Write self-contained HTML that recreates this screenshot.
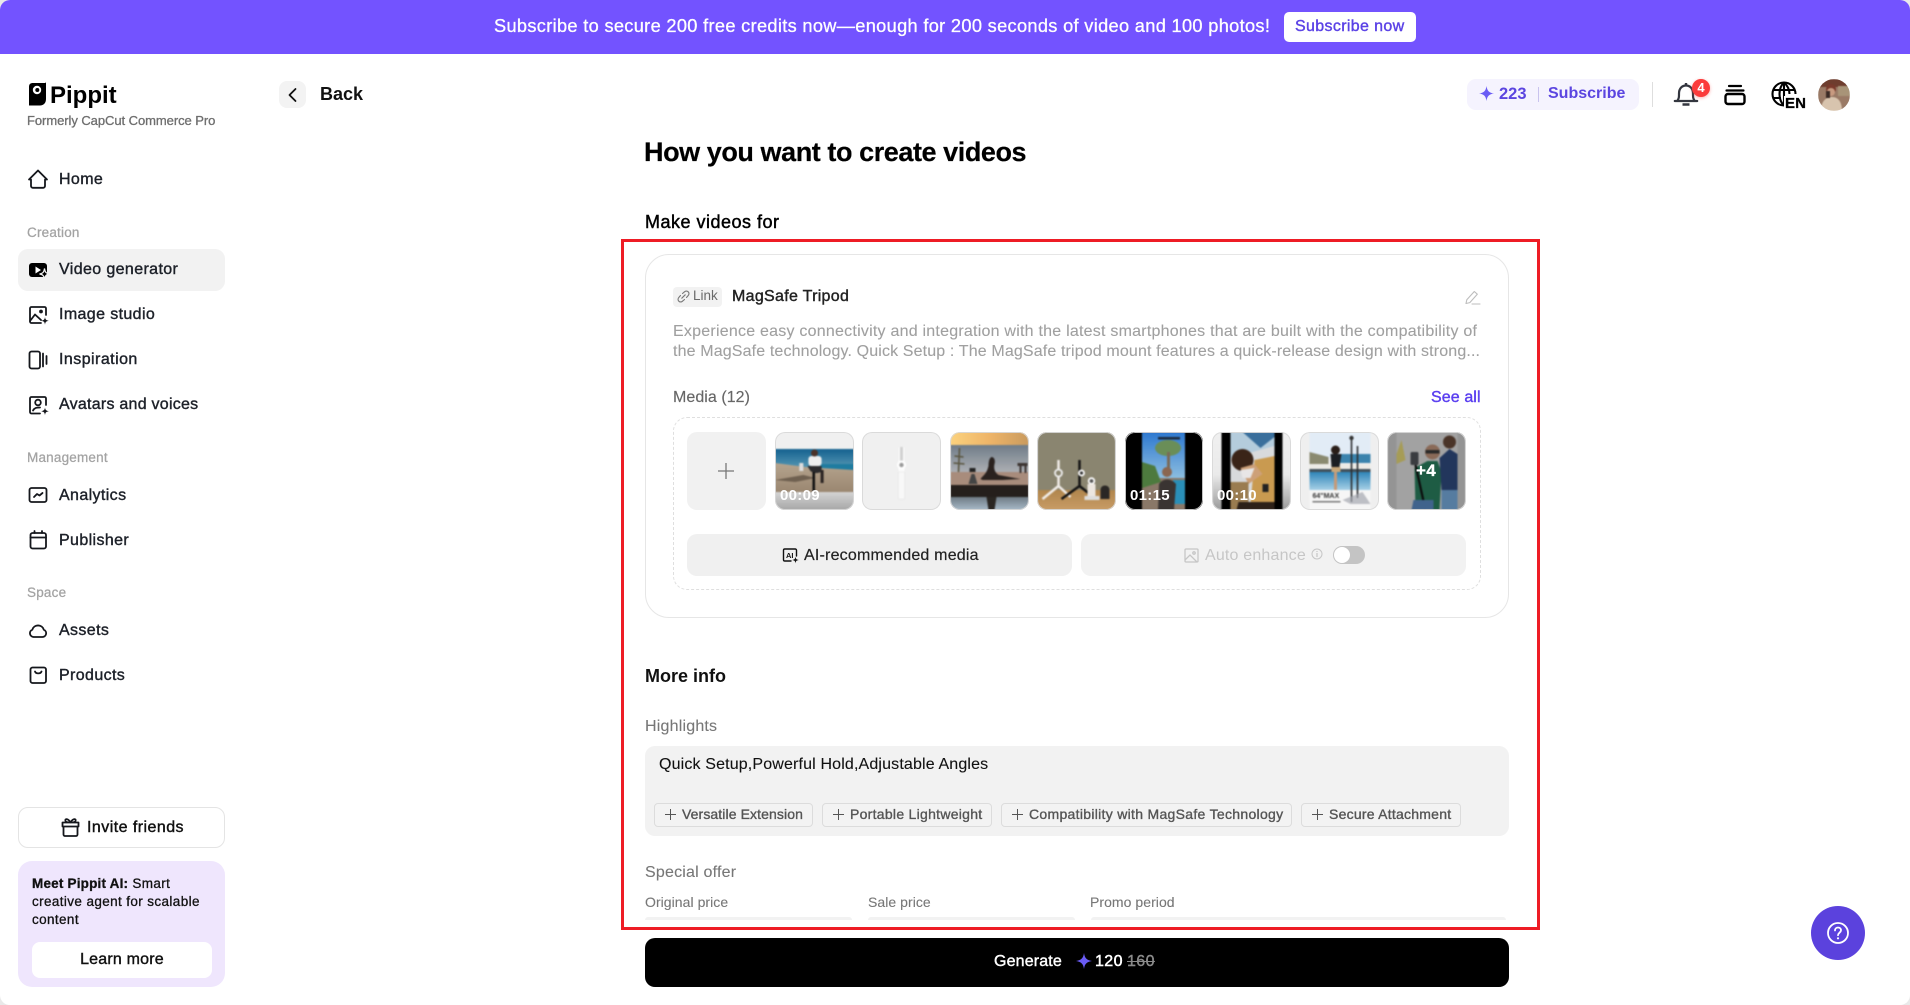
<!DOCTYPE html>
<html lang="en"><head><meta charset="utf-8"><title>Pippit</title>
<style>
*{box-sizing:border-box}
html,body{margin:0;padding:0;width:1910px;height:1005px;overflow:hidden;background:#e9e9e9}
body{font-family:"Liberation Sans",sans-serif;color:#111}
#app{position:absolute;left:0;top:0;width:1910px;height:1005px;background:#fff;border-radius:10px;overflow:hidden}
.a{position:absolute;white-space:nowrap;line-height:1}
.m{-webkit-text-stroke:.4px currentColor}
.nav{left:59px;font-size:16px;color:#1d2129;letter-spacing:.38px}
.cat{left:27px;font-size:13.5px;color:#a3a3a3;letter-spacing:.2px}
svg{position:absolute;overflow:visible}
.ic{fill:none;stroke:#15171c;stroke-width:1.8;stroke-linecap:round;stroke-linejoin:round}
.tile{position:absolute;top:432px;width:79px;height:78px;border-radius:10px;overflow:hidden;background:#f0f0f0}
.tile svg{left:0;top:0;width:100%;height:100%;filter:blur(.7px)}
.tile b{position:absolute;left:5px;top:56px;font-size:15px;line-height:1;color:#fff;letter-spacing:.3px}
.tile:after{content:"";position:absolute;inset:0;border-radius:10px;box-shadow:inset 0 0 0 1px rgba(215,215,215,.9)}
.chip{position:absolute;top:803px;height:24px;border:1px solid #dcdcdc;border-radius:4px;background:#f3f3f3;font-size:14px;line-height:21px;color:#555;-webkit-text-stroke:.35px #555;padding-left:27px;white-space:nowrap;letter-spacing:.1px}
.chip:before{content:"";position:absolute;left:10px;top:10px;width:11px;height:1px;background:#555}
.chip:after{content:"";position:absolute;left:15px;top:5px;width:1px;height:11px;background:#555}
</style></head><body>
<div id="app">

<!-- banner -->
<div class="a" style="left:0;top:0;width:1910px;height:54px;background:#7353ff"></div>
<div class="a" style="left:494px;top:17px;font-size:18.2px;color:#fff;letter-spacing:.33px;-webkit-text-stroke:.3px #fff">Subscribe to secure 200 free credits now—enough for 200 seconds of video and 100 photos!</div>
<div class="a" style="left:1284px;top:12px;width:132px;height:30px;background:#fff;border-radius:5px"></div>
<div class="a m" style="left:1295px;top:19px;font-size:16px;color:#5b42e6;letter-spacing:.35px">Subscribe now</div>

<!-- logo -->
<svg style="left:28px;top:81px" width="20" height="25" viewBox="0 0 20 25"><path d="M1 6C1 3 2.500 2 5 2H17.500L18 .8V18C18 22 15.500 24.500 12 24.500H1Z" fill="#000"/><circle cx="9" cy="9" r="4.200" fill="#fff"/><circle cx="9.300" cy="9" r="2" fill="#000"/></svg>
<div class="a" style="left:50px;top:84px;font-size:24px;font-weight:700;color:#000;letter-spacing:0">Pippit</div>
<div class="a m" style="left:27px;top:114px;font-size:13px;color:#6e6e6e;letter-spacing:-.06px;-webkit-text-stroke:.3px #6e6e6e">Formerly CapCut Commerce Pro</div>

<!-- back -->
<div class="a" style="left:279px;top:81px;width:27px;height:27px;background:#f3f3f3;border-radius:8px"></div>
<svg style="left:279px;top:81px" width="27" height="27"><path d="M16.500 8L10.500 14L16.500 20" fill="none" stroke="#111" stroke-width="1.800" stroke-linecap="round" stroke-linejoin="round"/></svg>
<div class="a" style="left:320px;top:85px;font-size:18px;font-weight:700;color:#111">Back</div>

<!-- sidebar -->
<svg class="ic" style="left:28px;top:169px" width="20" height="20" viewBox="0 0 20 20"><path d="M1 10.500L10 1.500L19 10.500H17V17A1.800 1.800 0 0 1 15.200 18.800H4.800A1.800 1.800 0 0 1 3 17V10.500Z"/></svg>
<div class="a m nav" style="top:172px">Home</div>
<div class="a m cat" style="top:226px;-webkit-text-stroke:.25px #a3a3a3">Creation</div>

<div class="a" style="left:18px;top:249px;width:207px;height:42px;background:#f2f2f2;border-radius:10px"></div>
<svg style="left:28px;top:261px" width="22" height="20" viewBox="0 0 22 20"><rect x="1" y="2" width="18" height="14" rx="3" fill="#000"/><path d="M7.500 5.500L13 9L7.500 12.500Z" fill="#fff"/><path d="M16.500 7.500C17 11 18 12.500 21.500 13C18 13.500 17 15 16.500 18.500C16 15 15 13.500 11.500 13C15 12.500 16 11 16.500 7.500Z" fill="#000" stroke="#f2f2f2" stroke-width="1.200"/></svg>
<div class="a m nav" style="top:262px">Video generator</div>

<svg class="ic" style="left:28px;top:306px" width="22" height="20" viewBox="0 0 22 20"><path d="M13 17H3.500A1.500 1.500 0 0 1 2 15.500V2.500A1.500 1.500 0 0 1 3.500 1H16.500A1.500 1.500 0 0 1 18 2.500V9"/><path d="M2 15L7 8.500L13 14"/><circle cx="13" cy="5.500" r="1" fill="#15171c"/><path d="M17 11C17.400 13.500 18 14.200 20.800 14.800C18 15.400 17.400 16 17 18.800C16.600 16 16 15.400 13.200 14.800C16 14.200 16.600 13.500 17 11Z" fill="#15171c" stroke="none"/></svg>
<div class="a m nav" style="top:307px">Image studio</div>

<svg class="ic" style="left:28px;top:350px" width="22" height="20" viewBox="0 0 22 20"><rect x="1.500" y="1.500" width="10.500" height="17" rx="2"/><path d="M15 3.500V16.500M18.500 6V14"/></svg>
<div class="a m nav" style="top:352px;letter-spacing:.45px">Inspiration</div>

<svg class="ic" style="left:28px;top:396px" width="22" height="20" viewBox="0 0 22 20"><path d="M12 17.500H3.500A1.500 1.500 0 0 1 2 16V2.500A1.500 1.500 0 0 1 3.500 1H16.500A1.500 1.500 0 0 1 18 2.500V9"/><circle cx="10" cy="6.500" r="2.800"/><path d="M5 14.500C6.500 12 8 11.500 12 11.500"/><path d="M17 11.500C17.400 14 18 14.600 20.800 15.200C18 15.800 17.400 16.400 17 19.200C16.600 16.400 16 15.800 13.200 15.200C16 14.600 16.600 14 17 11.500Z" fill="#15171c" stroke="none"/></svg>
<div class="a m nav" style="top:397px;letter-spacing:.25px">Avatars and voices</div>

<div class="a m cat" style="top:451px;-webkit-text-stroke:.25px #a3a3a3">Management</div>
<svg class="ic" style="left:28px;top:486px" width="20" height="18" viewBox="0 0 20 18"><rect x="1.500" y="2" width="17" height="14" rx="2"/><path d="M6 11L9 8L11.500 9.500L14.500 7"/></svg>
<div class="a m nav" style="top:488px">Analytics</div>
<svg class="ic" style="left:28px;top:530px" width="20" height="20" viewBox="0 0 20 20"><rect x="2.500" y="3" width="15.500" height="15.500" rx="2"/><path d="M2.500 7.500H18M6.500 1V3M14 1V3"/></svg>
<div class="a m nav" style="top:533px">Publisher</div>
<div class="a m cat" style="top:586px;-webkit-text-stroke:.25px #a3a3a3">Space</div>
<svg class="ic" style="left:28px;top:620px" width="20" height="19" viewBox="0 0 20 19"><path d="M5.500 17H14.500A3.800 3.800 0 0 0 15.800 9.700A6 6 0 0 0 4.300 9.700A3.800 3.800 0 0 0 5.500 17Z"/></svg>
<div class="a m nav" style="top:623px">Assets</div>
<svg class="ic" style="left:28px;top:666px" width="20" height="19" viewBox="0 0 20 19"><rect x="2.500" y="1.500" width="15.500" height="15.500" rx="2"/><path d="M7 5.500C8 8 12.500 8 13.500 5.500"/></svg>
<div class="a m nav" style="top:668px">Products</div>

<div class="a" style="left:18px;top:807px;width:207px;height:41px;border:1px solid #e4e4e4;border-radius:10px;background:#fff"></div>
<svg class="ic" style="left:61px;top:817px" width="19" height="20" viewBox="0 0 19 20"><path d="M2.500 9.500V17.500A1.500 1.500 0 0 0 4 19H15A1.500 1.500 0 0 0 16.500 17.500V9.500M1.500 5.500H17.500V9.500H1.500ZM9.500 5.500C7 1 3.500 1.500 4.500 4C5 5 7 5.500 9.500 5.500C12 5.500 14 5 14.500 4C15.500 1.500 12 1 9.500 5.500Z"/></svg>
<div class="a m" style="left:87px;top:820px;font-size:16px;color:#111;letter-spacing:.45px">Invite friends</div>

<div class="a" style="left:18px;top:861px;width:207px;height:126px;background:#efe6fd;border-radius:14px"></div>
<div class="a m" style="left:32px;top:875px;font-size:13.5px;line-height:18px;color:#111;white-space:normal;width:195px;letter-spacing:.38px;-webkit-text-stroke:.3px #111"><b style="letter-spacing:.2px">Meet Pippit AI:</b> Smart<br>creative agent for scalable<br>content</div>
<div class="a" style="left:32px;top:942px;width:180px;height:36px;background:#fff;border-radius:8px"></div>
<div class="a m" style="left:32px;top:952px;width:180px;text-align:center;font-size:16px;color:#111;letter-spacing:.2px">Learn more</div>

<!-- top right -->
<div class="a" style="left:1467px;top:79px;width:172px;height:31px;background:#f5f3fe;border-radius:9px"></div>
<svg style="left:1479px;top:86px" width="15" height="15" viewBox="0 0 14 14"><path d="M7 0C7.600 4.500 9.500 6.400 14 7C9.500 7.600 7.600 9.500 7 14C6.400 9.500 4.500 7.600 0 7C4.500 6.400 6.400 4.500 7 0Z" fill="#6a5cf5"/></svg>
<div class="a" style="left:1499px;top:86px;font-size:16.5px;font-weight:700;color:#5b45e0">223</div>
<div class="a" style="left:1538px;top:87px;width:1px;height:15px;background:#c9c3ee"></div>
<div class="a" style="left:1548px;top:86px;font-size:16px;font-weight:700;color:#5b45e0;letter-spacing:0">Subscribe</div>
<div class="a" style="left:1652px;top:82px;width:1px;height:25px;background:#dedede"></div>
<svg style="left:1674px;top:82px" width="24" height="25" viewBox="0 0 24 25"><path d="M3.500 18.500C5 16.500 5 15 5 11.500C5 6.500 8 3.500 12 3.500C16 3.500 19 6.500 19 11.500C19 15 19 16.500 20.500 18.500M.8 19H23.200" fill="none" stroke="#33363f" stroke-width="2.200" stroke-linecap="round"/><path d="M12 1V3M8.500 22.500H15.500" stroke="#33363f" stroke-width="2.400" fill="none"/></svg>
<div class="a" style="left:1692px;top:79px;width:18px;height:18px;border-radius:50%;background:#fb3b3b;color:#fff;font-size:13px;font-weight:700;text-align:center;line-height:18px;box-shadow:0 1px 3px rgba(250,60,60,.4)">4</div>
<svg style="left:1724px;top:84px" width="22" height="22" viewBox="0 0 22 22"><path d="M5 2H17M2.500 6.500H19.500" fill="none" stroke="#000" stroke-width="2.200" stroke-linecap="round"/><rect x="1.500" y="10" width="19" height="10" rx="2.500" fill="none" stroke="#000" stroke-width="2.400"/></svg>
<svg style="left:1771px;top:81px" width="26" height="26" viewBox="0 0 26 26"><g fill="none" stroke="#000" stroke-width="2.100"><path d="M13 24.500A11.500 11.500 0 1 1 24.500 13"/><path d="M13 1.500C7 7 7 19 13 24.500M13 1.500C17.500 5.500 18.500 10 18.500 13M13 1.500V24.500M2 9H24M2 17H10"/></g></svg>
<div class="a" style="left:1784px;top:96px;font-size:15px;font-weight:700;color:#000;background:#fff;padding:0 0 0 1px;letter-spacing:.1px;-webkit-text-stroke:.3px #000">EN</div>
<svg style="left:1818px;top:79px" width="32" height="32" viewBox="0 0 32 32"><defs><clipPath id="av"><circle cx="16" cy="16" r="16"/></clipPath></defs><g clip-path="url(#av)" style="filter:blur(.6px)"><rect width="32" height="32" fill="#9a7a66"/><rect y="0" width="32" height="8" fill="#6e3d2e"/><rect x="20" y="7" width="12" height="10" fill="#a89478"/><circle cx="13" cy="10" r="5" fill="#7a3a2c"/><circle cx="13" cy="13" r="4" fill="#c89a80"/><path d="M3 32C3 22 8 18 14 18C21 18 24 24 24 32Z" fill="#d8c4ae"/><rect x="8" y="12" width="4" height="7" fill="#3b2a25"/></g></svg>

<!-- heading -->
<div class="a" style="left:644px;top:139px;font-size:27px;font-weight:700;color:#000;letter-spacing:-.43px;-webkit-text-stroke:.2px #000">How you want to create videos</div>
<div class="a" style="left:645px;top:213px;font-size:18px;color:#000;letter-spacing:.5px;-webkit-text-stroke:.45px #000">Make videos for</div>

<!-- red box -->
<div class="a" style="left:621px;top:239px;width:919px;height:691px;border:3px solid #ee1c25"></div>

<!-- card -->
<div class="a" style="left:645px;top:254px;width:864px;height:364px;border:1px solid #e6e6e6;border-radius:24px"></div>
<div class="a" style="left:673px;top:287px;width:49px;height:20px;background:#f2f2f2;border-radius:4px"></div>
<svg style="left:677px;top:290px" width="13" height="13" viewBox="0 0 13 13"><g fill="none" stroke="#777" stroke-width="1.100" stroke-linecap="round"><path d="M5.500 3.500L7.500 1.800A2.400 2.400 0 0 1 11.200 5.500L9.500 7.500"/><path d="M7.500 9.500L5.500 11.200A2.400 2.400 0 0 1 1.800 7.500L3.500 5.500"/><path d="M4.800 8.200L8.200 4.800"/></g></svg>
<div class="a" style="left:693px;top:289px;font-size:13.5px;color:#6a6a6a">Link</div>
<div class="a m" style="left:732px;top:289px;font-size:16px;color:#222;letter-spacing:.3px">MagSafe Tripod</div>
<svg style="left:1465px;top:290px" width="16" height="15" viewBox="0 0 16 15"><g fill="none" stroke="#bdbdbd" stroke-width="1.100" stroke-linejoin="round" stroke-linecap="round"><path d="M1 13.500L1.800 9.800L9.300 1.500L12.300 4.200L4.800 12.600Z"/><path d="M7 14H15"/></g></svg>
<div class="a" style="left:673px;top:324px;font-size:16px;color:#a0a0a0;letter-spacing:.23px;-webkit-text-stroke:.1px #a0a0a0">Experience easy connectivity and integration with the latest smartphones that are built with the compatibility of</div>
<div class="a" style="left:673px;top:344px;font-size:16px;color:#a0a0a0;letter-spacing:.14px;-webkit-text-stroke:.1px #a0a0a0">the MagSafe technology. Quick Setup : The MagSafe tripod mount features a quick-release design with strong...</div>
<div class="a" style="left:673px;top:390px;font-size:16px;color:#666;letter-spacing:.05px;-webkit-text-stroke:.15px #666">Media (12)</div>
<div class="a m" style="left:1431px;top:390px;font-size:16px;color:#5a3ff0;letter-spacing:.1px">See all</div>

<!-- media -->
<div class="a" style="left:673px;top:417px;width:808px;height:173px;border:1px dashed #dfdfdf;border-radius:14px"></div>
<div class="a" style="left:687px;top:432px;width:79px;height:78px;background:#f1f1f1;border-radius:10px"></div>
<svg style="left:718px;top:463px" width="16" height="16"><path d="M8 0V16M0 8H16" stroke="#777" stroke-width="1.300"/></svg>

<div class="tile" style="left:775px"><svg viewBox="0 0 78 78" preserveAspectRatio="none"><defs><linearGradient id="g1" x1="0" y1="0" x2="0" y2="1"><stop offset="0" stop-color="#d4d4d4"/><stop offset="1" stop-color="#a6a6a6"/></linearGradient><linearGradient id="s1" x1="0" y1="0" x2="0" y2="1"><stop offset="0" stop-color="#14618f"/><stop offset="1" stop-color="#5a9ab5"/></linearGradient><linearGradient id="sd" x1="0" y1="0" x2="0" y2="1"><stop offset="0" stop-color="#b5a48e"/><stop offset="1" stop-color="#9a8670"/></linearGradient></defs><rect y="17" width="78" height="20" fill="url(#s1)"/><rect x="45" y="32" width="33" height="6" fill="#1f7ca0"/><path d="M0 31L30 35L78 38V60H0Z" fill="url(#sd)"/><path d="M0 48L28 43L40 46L20 50Z" fill="#6f6050"/><rect y="60" width="78" height="18" fill="url(#g1)"/><rect x="33" y="24" width="13" height="10" rx="3" fill="#eee"/><circle cx="39" cy="21" r="3.500" fill="#4a3228"/><path d="M32 34H46L46 40L42 41L38 41L35 39Z" fill="#2b2a2c"/><rect x="37" y="40" width="2.500" height="20" fill="#111"/><rect x="45" y="38" width="3" height="13" fill="#2a2322"/><rect x="24" y="31" width="4" height="8" fill="#ddd"/></svg><b>00:09</b></div>

<div class="tile" style="left:862px"><svg viewBox="0 0 78 78"><rect x="36" y="15" width="6" height="52" rx="2" fill="#fafafa"/><rect x="37.500" y="15" width="3" height="20" fill="#d0d0d0"/><rect x="36" y="40" width="6" height="27" fill="#f8f8f8" stroke="#e2e2e2" stroke-width=".5"/><circle cx="39" cy="33" r="4.500" fill="#fff"/><circle cx="39" cy="33" r="2.200" fill="#9a9a9a"/></svg></div>

<div class="tile" style="left:950px"><svg viewBox="0 0 78 78"><defs><linearGradient id="sk" x1="0" y1="0" x2="1" y2="0"><stop offset="0" stop-color="#fbd27e"/><stop offset=".5" stop-color="#eeb468"/><stop offset="1" stop-color="#c99a5e"/></linearGradient><linearGradient id="se" x1="0" y1="0" x2="0" y2="1"><stop offset="0" stop-color="#6f7c88"/><stop offset="1" stop-color="#aeb0b4"/></linearGradient><linearGradient id="wt" x1="0" y1="0" x2="0" y2="1"><stop offset="0" stop-color="#6e7a84"/><stop offset="1" stop-color="#a8bac8"/></linearGradient></defs><rect width="78" height="14" fill="url(#sk)"/><rect y="13" width="78" height="28" fill="url(#se)"/><rect y="40" width="78" height="13" fill="#a88c7c"/><rect y="53" width="78" height="12" fill="#251f1c"/><rect y="65" width="78" height="13" fill="url(#wt)"/><path d="M30 47C33 43 36 42 38 34C38 29 39 26 41 25C44 25 45 29 44 32C43 36 44 40 48 43L70 47L52 48H32Z" fill="#2a221f"/><path d="M18 52L21 42H24L27 52Z" fill="#444"/><rect x="19" y="36" width="6" height="4" fill="#222"/><path d="M8 40L9 16M4 24L13 25M3 31L14 32" stroke="#5a5640" stroke-width="1.600"/><rect x="67" y="31" width="10" height="3" fill="#3d3532"/><rect x="69" y="34" width="2" height="7" fill="#3d3532"/><rect x="74" y="34" width="2" height="7" fill="#3d3532"/><path d="M36 65L38 78H44L46 65Z" fill="#2a2622"/></svg></div>

<div class="tile" style="left:1037px"><svg viewBox="0 0 78 78"><defs><linearGradient id="wd" x1="0" y1="0" x2="0" y2="1"><stop offset="0" stop-color="#b0854c"/><stop offset="1" stop-color="#c89c66"/></linearGradient></defs><rect width="78" height="60" fill="#8a8570"/><rect y="58" width="78" height="20" fill="url(#wd)"/><path d="M21 28V54M21 54L5 67M21 54L33 65" stroke="#f0ece8" stroke-width="2.500"/><circle cx="21" cy="41" r="3.500" fill="#8a8570" stroke="#eee" stroke-width="1.800"/><path d="M42 28V54M42 54L24 67M42 54L56 65" stroke="#141414" stroke-width="2.500"/><circle cx="44" cy="41" r="2.500" fill="#333" stroke="#fff" stroke-width="1.800"/><circle cx="54" cy="49" r="2.800" fill="#555" stroke="#fff" stroke-width="1.800"/><rect x="50" y="52" width="8" height="14" fill="#ece6e0"/><rect x="47" y="64" width="15" height="4" fill="#ddd"/><path d="M63 67V58C63 52 72 52 72 58V67Z" fill="#2a2725"/></svg></div>

<div class="tile" style="left:1125px;width:78px;background:#000"><svg viewBox="0 0 78 78"><defs><linearGradient id="sb" x1="0" y1="0" x2="0" y2="1"><stop offset="0" stop-color="#2d78d0"/><stop offset="1" stop-color="#8fc0e0"/></linearGradient></defs><rect width="78" height="78" fill="#000"/><rect x="17" width="43" height="48" fill="url(#sb)"/><rect x="17" y="46" width="43" height="32" fill="#8a7868"/><rect x="48" y="48" width="12" height="24" fill="#2a8fb8"/><path d="M17 30L30 34L36 50L17 56Z" fill="#4d7a3e"/><ellipse cx="43" cy="16" rx="13" ry="8" fill="#6a8e58"/><rect x="42" y="20" width="3" height="18" fill="#7a6a58"/><circle cx="42" cy="40" r="5" fill="#8a6650"/><path d="M33 78L34 52C38 46 46 46 51 52L49 78Z" fill="#3a3432"/><rect x="33" y="5" width="22" height="2.500" fill="#1c2a3c"/></svg><b>01:15</b></div>

<div class="tile" style="left:1212px"><svg viewBox="0 0 78 78"><defs><linearGradient id="gv" x1="0" y1="0" x2="0" y2="1"><stop offset="0" stop-color="#f0f0f0"/><stop offset=".55" stop-color="#eaeaea"/><stop offset="1" stop-color="#9a9a9a"/></linearGradient></defs><rect width="78" height="78" fill="url(#gv)"/><rect x="9" width="61" height="78" fill="#000"/><rect x="18" width="44" height="78" fill="#d8dadc"/><path d="M18 0H62V14L18 26Z" fill="#b4ccdc"/><path d="M30 0L48 16L62 5V0Z" fill="#3a6f9c"/><path d="M42 28L62 24V72H38Z" fill="#c99a50"/><circle cx="30" cy="28" r="11" fill="#3a2418"/><path d="M28 36L42 32L50 42L36 52Z" fill="#cda078"/><path d="M28 38L42 36L38 46L30 46Z" fill="#e8e6e6"/><path d="M18 50H36L36 78H18Z" fill="#9a7c50"/><path d="M26 70H62V78H24Z" fill="#2c2018"/><rect x="50" y="52" width="6" height="8" fill="#222"/></svg><b>00:10</b></div>

<div class="tile" style="left:1300px"><svg viewBox="0 0 78 78"><defs><linearGradient id="pl" x1="0" y1="0" x2="0" y2="1"><stop offset="0" stop-color="#2e84b8"/><stop offset="1" stop-color="#a6d0e6"/></linearGradient></defs><rect width="78" height="78" fill="#efefef"/><rect x="9" width="61" height="26" fill="#e2ecf6"/><rect x="32" y="22" width="38" height="9" fill="#3a83ad"/><path d="M9 20L28 25V34H9Z" fill="#8a8a70"/><rect x="9" y="32" width="61" height="6" fill="#ecebe6"/><rect x="9" y="37" width="61" height="3" fill="#41515c"/><rect x="9" y="40" width="61" height="18" fill="url(#pl)"/><rect x="9" y="58" width="61" height="20" fill="#f6f6f6"/><circle cx="35" cy="18" r="4.500" fill="#2a1e18"/><path d="M30 22H41L39 35H31Z" fill="#1c1e22"/><path d="M31 35H40V40H31Z" fill="#c8a678"/><path d="M33.500 40H36.500V58H33.500Z" fill="#c59a78"/><path d="M51 5V70M57 14V66" stroke="#2c2e30" stroke-width="1.600"/><circle cx="51" cy="6" r="2.200" fill="#333"/><path d="M42 68L62 60L70 72H50Z" fill="#a5a8b0" opacity=".7"/><text x="12" y="66" font-size="7" font-weight="700" font-family="Liberation Sans,sans-serif" fill="#333">64"MAX</text><rect x="12" y="69" width="28" height="1.500" fill="#777"/></svg></div>

<div class="tile" style="left:1387px"><svg viewBox="0 0 78 78"><rect width="78" height="78" fill="#949494"/><rect x="9" width="61" height="78" fill="#a2a2a2"/><path d="M9 22L14 8L18 28L9 32Z" fill="#a69c56"/><circle cx="45" cy="20" r="7.500" fill="#8a6a58"/><rect x="38" y="18" width="14" height="3.500" fill="#2a2a2a"/><path d="M28 78L27 36L40 29H50L54 40L52 78Z" fill="#1e5c44"/><circle cx="62" cy="10" r="6.500" fill="#4a3428"/><path d="M52 26L62 17L70 22V58H54Z" fill="#22365c"/><path d="M54 58H70V78H54Z" fill="#567ca0"/><rect x="23" y="20" width="8" height="13" rx="1.500" fill="#3a3c40"/><path d="M28 33L38 78" stroke="#0c0c0c" stroke-width="2.200"/><path d="M26 68H46V78H24Z" fill="#40638c"/></svg><b style="left:29px;top:30px;font-size:17px;-webkit-text-stroke:.3px #fff">+4</b></div>

<!-- action buttons -->
<div class="a" style="left:687px;top:534px;width:385px;height:42px;background:#f0f0f0;border-radius:10px"></div>
<svg style="left:782px;top:548px" width="17" height="16" viewBox="0 0 17 16"><path d="M9 13H2.800A1.300 1.300 0 0 1 1.500 11.700V2.300A1.300 1.300 0 0 1 2.800 1H13.200A1.300 1.300 0 0 1 14.500 2.300V8" fill="none" stroke="#111" stroke-width="1.400" stroke-linecap="round"/><text x="4" y="9.800" font-size="7.500" font-weight="700" font-family="Liberation Sans,sans-serif" fill="#111">AI</text><path d="M13.500 8.500C13.800 11 14.500 11.700 17 12C14.500 12.300 13.800 13 13.500 15.500C13.200 13 12.500 12.300 10 12C12.500 11.700 13.200 11 13.500 8.500Z" fill="#111"/></svg>
<div class="a" style="left:804px;top:548px;font-size:16px;color:#222;letter-spacing:.2px;-webkit-text-stroke:.2px #222">AI-recommended media</div>
<div class="a" style="left:1081px;top:534px;width:385px;height:42px;background:#f2f2f2;border-radius:10px"></div>
<svg style="left:1184px;top:548px" width="15" height="15" viewBox="0 0 15 15"><g fill="none" stroke="#c6c6c6" stroke-width="1.300"><rect x="1" y="1" width="13" height="13" rx="1"/><path d="M1 12L6 7L13 14"/><circle cx="10" cy="5" r="1.200"/></g></svg>
<div class="a" style="left:1205px;top:548px;font-size:16px;color:#c6c6c6;letter-spacing:.18px">Auto enhance</div>
<svg style="left:1311px;top:548px" width="12" height="12" viewBox="0 0 12 12"><circle cx="6" cy="6" r="5" fill="none" stroke="#c6c6c6"/><path d="M6 5V9M6 3V4" stroke="#c6c6c6" stroke-width="1.200"/></svg>
<div class="a" style="left:1333px;top:546px;width:32px;height:18px;background:#c4c4c4;border-radius:9px"></div>
<div class="a" style="left:1334px;top:547px;width:16px;height:16px;background:#fff;border-radius:50%"></div>

<!-- more info -->
<div class="a" style="left:645px;top:667px;font-size:18px;font-weight:700;color:#111">More info</div>
<div class="a" style="left:645px;top:719px;font-size:16px;color:#777;letter-spacing:.2px;-webkit-text-stroke:.1px #777">Highlights</div>
<div class="a" style="left:645px;top:746px;width:864px;height:90px;background:#f2f2f2;border-radius:10px"></div>
<div class="a" style="left:659px;top:757px;font-size:16px;color:#111;letter-spacing:.15px;-webkit-text-stroke:.1px #111">Quick Setup,Powerful Hold,Adjustable Angles</div>
<div class="chip" style="left:654px;width:159px">Versatile Extension</div>
<div class="chip" style="left:822px;width:170px;letter-spacing:.28px">Portable Lightweight</div>
<div class="chip" style="left:1001px;width:291px;letter-spacing:.3px">Compatibility with MagSafe Technology</div>
<div class="chip" style="left:1301px;width:160px;letter-spacing:.24px">Secure Attachment</div>

<div class="a" style="left:645px;top:865px;font-size:16px;color:#777;letter-spacing:.2px;-webkit-text-stroke:.1px #777">Special offer</div>
<div class="a" style="left:645px;top:895px;font-size:14px;color:#777;letter-spacing:.05px;-webkit-text-stroke:.1px #777">Original price</div>
<div class="a" style="left:868px;top:895px;font-size:14px;color:#777;letter-spacing:.05px;-webkit-text-stroke:.1px #777">Sale price</div>
<div class="a" style="left:1090px;top:895px;font-size:14px;color:#777;letter-spacing:.05px;-webkit-text-stroke:.1px #777">Promo period</div>
<div class="a" style="left:645px;top:917px;width:207px;height:3px;background:#f2f2f2;border-radius:6px 6px 0 0"></div>
<div class="a" style="left:868px;top:917px;width:207px;height:3px;background:#f2f2f2;border-radius:6px 6px 0 0"></div>
<div class="a" style="left:1091px;top:917px;width:415px;height:3px;background:#f2f2f2;border-radius:6px 6px 0 0"></div>

<!-- generate -->
<div class="a" style="left:645px;top:938px;width:864px;height:49px;background:#000;border-radius:10px"></div>
<div class="a m" style="left:994px;top:954px;font-size:16px;color:#fff;letter-spacing:.15px">Generate</div>
<svg style="left:1076px;top:953px" width="16" height="16" viewBox="0 0 14 14"><path d="M7 0C7.600 4.500 9.500 6.400 14 7C9.500 7.600 7.600 9.500 7 14C6.400 9.500 4.500 7.600 0 7C4.500 6.400 6.400 4.500 7 0Z" fill="#6a5cf5"/></svg>
<div class="a" style="left:1095px;top:954px;font-size:16px;color:#fff;letter-spacing:.4px;-webkit-text-stroke:.5px #fff">120</div>
<div class="a" style="left:1127px;top:954px;font-size:16px;color:#8a8a8a;text-decoration:line-through;letter-spacing:.4px;-webkit-text-stroke:.4px #8a8a8a">160</div>

<!-- help -->
<div class="a" style="left:1811px;top:906px;width:54px;height:54px;border-radius:50%;background:#5b42dd"></div>
<svg style="left:1826px;top:921px" width="24" height="24" viewBox="0 0 24 24"><circle cx="12" cy="12" r="10" fill="none" stroke="#fff" stroke-width="1.800"/><path d="M9 9.500C9 7.500 10.500 6.500 12 6.500C13.800 6.500 15 7.700 15 9.200C15 11.500 12 11.800 12 14.200" fill="none" stroke="#fff" stroke-width="1.800" stroke-linecap="round"/><circle cx="12" cy="17.300" r="1.100" fill="#fff"/></svg>
</div>
</body></html>
